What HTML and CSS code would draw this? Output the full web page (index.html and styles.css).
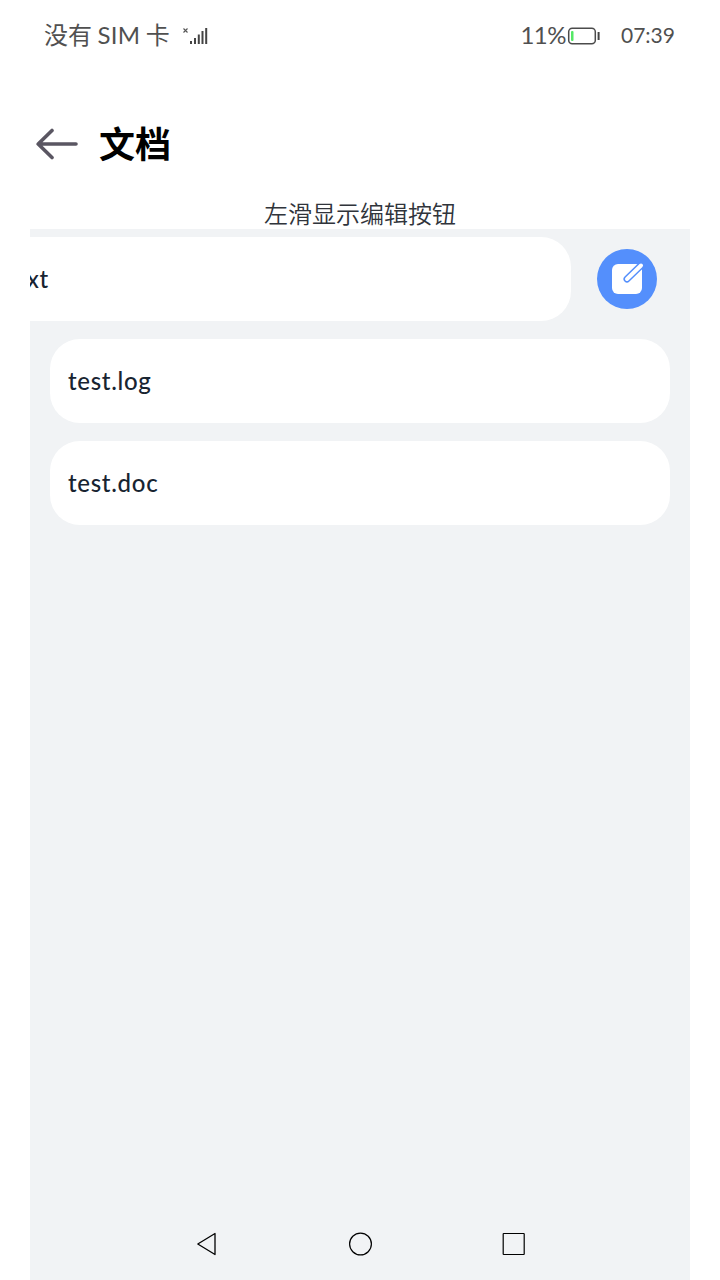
FILE: index.html
```html
<!DOCTYPE html>
<html lang="zh-CN">
<head>
<meta charset="utf-8">
<title>文档</title>
<link rel="stylesheet" href="styles.css">
</head>
<body>
<div class="screen">
  <header class="status">
    <span class="carrier">没有 <span class="sim">SIM</span> 卡</span>
    <svg class="signal" width="26" height="20" viewBox="0 0 26 20">
      <path d="M1.5 2.500l4 4m0-4l-4 4" stroke="#555" stroke-width="1.1"/>
      <path d="M9 15v3M13 12v6M16.8 8.5V18M20.5 5v13M24.2 2v16" stroke="#444" stroke-width="2"/>
    </svg>
    <span class="percent">11%</span>
    <svg class="battery" width="34" height="18" viewBox="0 0 34 18">
      <rect x="1.7" y="1.2" width="26.6" height="15.6" rx="3.5" fill="none" stroke="#4b4b4b" stroke-width="1.5"/>
      <rect x="4" y="4" width="2.5" height="10" rx="1" fill="#55e866"/>
      <path d="M31.6 5v8" stroke="#444" stroke-width="2"/>
    </svg>
    <time class="clock">07:39</time>
  </header>
  <div class="titlebar">
    <svg class="back" width="42" height="32" viewBox="0 0 42 32">
      <path d="M40 16H3M16 2.5L2.2 16L16 29.5" fill="none" stroke="#5a5662" stroke-width="3.6" stroke-linecap="round" stroke-linejoin="round"/>
    </svg>
    <h1 class="title">文档</h1>
  </div>
  <p class="hint">左滑显示编辑按钮</p>
  <main class="files">
    <div class="row swiped">
      <div class="card"><span class="name">test.txt</span></div>
      <button class="edit" aria-label="编辑">
        <svg width="60" height="60" viewBox="0 0 60 60">
          <rect x="15" y="15" width="30" height="30" rx="6" fill="#fff"/>
          <path d="M30 30L46 14.500" stroke="#548ffc" stroke-width="7" stroke-linecap="round"/>
          <path d="M30 30L44 16.500" stroke="#fff" stroke-width="4" stroke-linecap="round"/>
        </svg>
      </button>
    </div>
    <div class="row"><div class="card"><span class="name">test.log</span></div></div>
    <div class="row"><div class="card"><span class="name">test.doc</span></div></div>
    <nav class="nav">
      <svg width="24" height="26" viewBox="0 0 24 26"><path d="M20 2.500V23.500L2.800 13Z" fill="none" stroke="#000" stroke-width="1.300" stroke-linejoin="round"/></svg>
      <svg width="24" height="26" viewBox="0 0 24 26"><circle cx="11.500" cy="13" r="10.900" fill="none" stroke="#000" stroke-width="1.200"/></svg>
      <svg width="24" height="26" viewBox="0 0 24 26"><rect x="1.200" y="2.500" width="21" height="21" rx=".5" fill="none" stroke="#000" stroke-width="1.200"/></svg>
    </nav>
  </main>
</div>
</body>
</html>
```
FILE: styles.css
```css
* { box-sizing: border-box; }
body {
  margin: 0;
  background: #fff;
  font-family: "Noto Sans CJK SC", sans-serif;
}
.screen {
  width: 720px;
  height: 1280px;
  display: flex;
  flex-direction: column;
  overflow: hidden;
}
.status {
  height: 72px;
  padding: 0 45px 0 44px;
  display: flex;
  align-items: center;
  color: #505050;
  white-space: nowrap;
}
.carrier { width: 138px; margin-top: -3px; font-size: 24px; line-height: 36px; }
.sim { font-family: Lato, sans-serif; letter-spacing: 0.3px; }
.signal { flex: none; }
.percent {
  margin-left: auto;
  margin-top: -3px;
  font-family: Lato, sans-serif;
  font-size: 24px;
  letter-spacing: -0.5px;
}
.battery { margin-left: 1px; }
.clock {
  width: 54px;
  margin-left: 20px;
  margin-top: -3px;
  font-family: Lato, sans-serif;
  font-size: 21px;
}
.titlebar {
  height: 144px;
  padding: 0 36px;
  display: flex;
  align-items: center;
  gap: 21px;
}
.title { margin: -5px 0 0; font-size: 36px; line-height: 52px; color: #000; }
.hint {
  height: 29px;
  margin: -16px 0 0;
  text-align: center;
  font-size: 24px;
  line-height: 26px;
  font-weight: 350;
  color: #30343b;
}
.files {
  flex: 1;
  margin: 0 30px;
  padding: 7.5px 0 23px;
  display: flex;
  flex-direction: column;
  gap: 18px;
  background: #f1f3f5;
  overflow: hidden;
}
.row {
  display: flex;
  align-items: center;
  padding: 0 20px;
  height: 84px;
}
.swiped { margin-left: -99px; }
.card {
  flex: none;
  width: 620px;
  height: 84px;
  padding: 0 18px;
  border-radius: 30px;
  display: flex;
  align-items: center;
  background: #fff;
}
.name {
  font-family: Lato, "Noto Sans CJK SC", sans-serif;
  font-size: 24px;
  line-height: 32px;
  font-weight: 500;
  letter-spacing: 0.7px;
  padding-top: 1px;
  color: #182431;
}
.swiped .name { letter-spacing: 0.5px; }
.edit {
  flex: none;
  width: 60px;
  height: 60px;
  margin-left: 26px;
  padding: 0;
  border: 0;
  border-radius: 50%;
  background: #548ffc;
}
.edit svg { display: block; }
.nav {
  margin: auto 164px 0 165px;
  display: flex;
  justify-content: space-between;
}
```
